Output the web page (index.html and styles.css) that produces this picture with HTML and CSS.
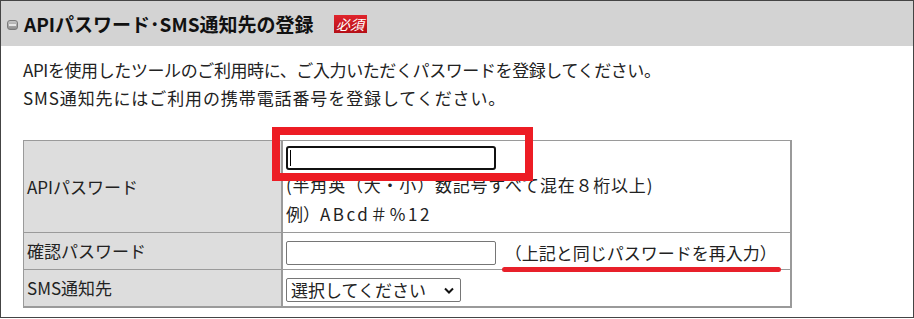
FILE: index.html
```html
<!DOCTYPE html>
<html lang="ja">

<head>
    <meta charset="UTF-8">
    <meta name="viewport" content="width=device-width, initial-scale=1.0">
    <title>APIパスワード･SMS通知先の登録</title>
    <link rel="stylesheet" href="styles.css">
</head>

<body>

    <div class="panel">
        <div class="panel-head">
            <span class="bullet"></span>
            <h2>APIパスワード･SMS通知先の登録</h2>
            <span class="required">必須</span>
        </div>

        <p class="lead">
            <span class="lead-tight">APIを使用したツールのご利用時に、ご入力いただくパスワードを登録してください。</span><br>
            <span class="lead-wide">SMS通知先にはご利用の携帯電話番号を登録してください。</span>
        </p>

        <table class="form-table">
            <tr class="row-pass">
                <th>APIパスワード</th>
                <td>
                    <span class="mark-box">
                        <input type="password" class="field field-active">
                        <span class="caret"></span>
                        <span class="red-box"></span>
                    </span>
                    <div class="hint hint-rule">(半角英（大・小）数記号すべて混在８桁以上)</div>
                    <div class="hint">例）<span class="sample">ABcd＃%12</span></div>
                </td>
            </tr>
            <tr>
                <th>確認パスワード</th>
                <td class="inline-cell">
                    <input type="password" class="field">
                    <span class="note">（上記と同じパスワードを再入力）</span>
                </td>
            </tr>
            <tr>
                <th>SMS通知先</th>
                <td class="inline-cell">
                    <span class="picker-wrap">
                        <select class="picker">
                            <option>選択してください</option>
                        </select>
                        <svg class="chevron" width="10" height="7" viewBox="0 0 10 7">
                            <path d="M1 1.5 L5 5.5 L9 1.5" fill="none" stroke="#111" stroke-width="2"/>
                        </svg>
                    </span>
                </td>
            </tr>
        </table>
    </div>

</body>

</html>
```

FILE: styles.css
```css
body {
    margin: 0;
    background-color: #ffffff;
    font-family: "Noto Sans CJK JP", "Noto Sans", sans-serif;
    color: #222222;
}

.panel {
    width: 912px;
    height: 316px;
    border: 1px solid #444444;
    border-right-width: 2px;
}

.panel-head {
    display: flex;
    align-items: center;
    height: 45px;
    background-color: #d3d3d3;
    padding-left: 6px;
}

.bullet {
    position: relative;
    width: 9px;
    height: 8px;
    margin-top: 2px;
    border: 1px solid #7a7a7a;
    border-radius: 3px;
    background: linear-gradient(#c4c4c4, #8f8f8f);
}

.bullet::after {
    content: "";
    position: absolute;
    left: 1px;
    right: 1px;
    top: 3px;
    height: 2px;
    background-color: #e6e6e6;
}

.panel-head h2 {
    margin: 0 0 0 6px;
    font-size: 19px;
    line-height: 24px;
    font-weight: bold;
    color: #111111;
}

.required {
    margin-left: 20px;
    width: 33px;
    height: 18px;
    line-height: 18px;
    text-align: center;
    font-size: 14px;
    font-style: italic;
    color: #ffffff;
    background: linear-gradient(#e0242c, #b50f17);
}

.lead {
    margin: 10px 0 0 22px;
    font-size: 17px;
    line-height: 28px;
}

.lead-tight {
    letter-spacing: -0.4px;
}

.lead-wide {
    letter-spacing: 0.9px;
}

.form-table {
    margin: 28px 0 0 22px;
    width: 769px;
    border-collapse: collapse;
    border: 2px solid #9a9a9a;
    border-top-width: 1px;
    border-left-width: 1px;
    font-size: 17px;
}

.form-table th,
.form-table td {
    border: 1px solid #9a9a9a;
    text-align: left;
    vertical-align: middle;
}

.form-table th {
    width: 254px;
    padding: 0 0 0 3px;
    background-color: #dddddd;
    font-weight: normal;
    line-height: 28px;
}

.form-table td {
    padding: 0 0 0 3px;
    border-left-width: 2px;
}

.row-pass td {
    padding-top: 5px;
    padding-bottom: 4px;
}

.hint {
    line-height: 29px;
}

.hint-rule {
    letter-spacing: 0.8px;
}

.sample {
    letter-spacing: 2.5px;
}

.field {
    box-sizing: border-box;
    width: 210px;
    height: 24px;
    margin: 0;
    border: 1px solid #767676;
    border-radius: 2px;
    background-color: #ffffff;
}

.field-active {
    display: block;
    border: 2px solid #111111;
    border-radius: 3px;
}

.mark-box {
    position: relative;
    display: block;
    width: 210px;
    height: 24px;
}

.caret {
    position: absolute;
    left: 4px;
    top: 4px;
    width: 1px;
    height: 16px;
    background-color: #000000;
}

.red-box {
    position: absolute;
    left: -14px;
    top: -19px;
    width: 245px;
    height: 38px;
    border: 8px solid #ed1c24;
}

.inline-cell {
    height: 36px;
}

.inline-cell .field {
    vertical-align: middle;
}

.note {
    position: relative;
    display: inline-block;
    margin-left: 5px;
    line-height: 24px;
    vertical-align: middle;
}

.note::after {
    content: "";
    position: absolute;
    left: -3px;
    right: -4px;
    top: 26px;
    height: 5px;
    border-radius: 3px;
    background-color: #e8202a;
}

.picker-wrap {
    position: relative;
    display: inline-block;
    vertical-align: middle;
}

.picker {
    display: block;
    appearance: none;
    width: 175px;
    height: 24px;
    margin: 0;
    padding: 0 0 0 4px;
    font-family: "Noto Sans CJK JP", "Noto Sans", sans-serif;
    font-size: 17px;
    line-height: 22px;
    color: #222222;
    border: 1px solid #767676;
    border-radius: 2px;
    background-color: #ffffff;
}

.chevron {
    position: absolute;
    left: 158px;
    top: 9px;
}
```
